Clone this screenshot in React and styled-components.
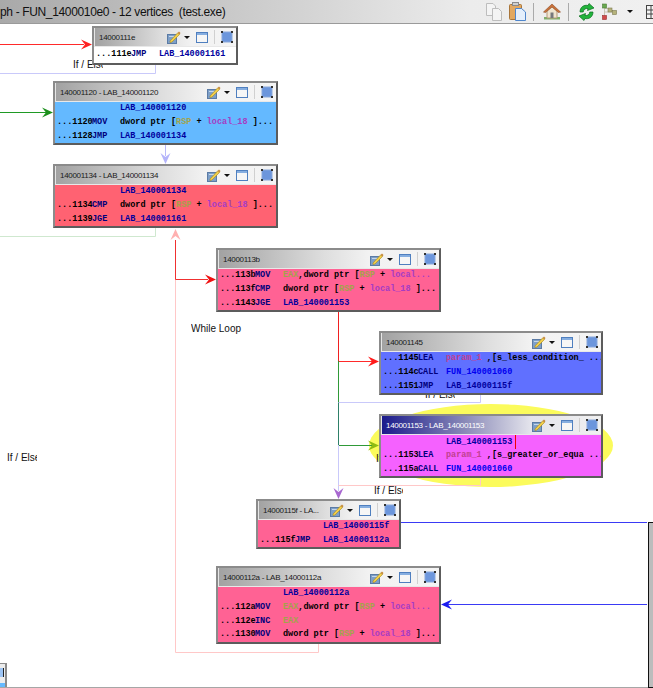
import React from "react";
import styled, { createGlobalStyle } from "styled-components";

const GlobalStyle = createGlobalStyle`
  html, body {
    margin: 0;
    padding: 0;
    background: #fff;
  }
`;

const Page = styled.div`
  width: 653px;
  height: 688px;
  overflow: hidden;
  display: flex;
  flex-direction: column;
  font-family: "Liberation Sans", Arial, sans-serif;
`;

const TitleBar = styled.div`
  height: 23px;
  flex: none;
  display: flex;
  align-items: center;
  overflow: hidden;
  border-bottom: 1px solid #9a9a9a;
  background: linear-gradient(90deg, #a9a9a9 0%, #d2d2d2 45%, #ececec 72%, #f0f0f0 100%);
`;

const TitleText = styled.span`
  font-size: 12px;
  letter-spacing: -0.35px;
  color: #111;
  white-space: pre;
`;

const Tools = styled.div`
  margin-left: auto;
  margin-right: -7px;
  display: flex;
  align-items: center;
  gap: 7px;
  flex: none;
`;

const ToolSep = styled.div`
  width: 1px;
  height: 18px;
  background: #aaa;
  margin-right: 2px;
`;

const Canvas = styled.div`
  position: relative;
  flex: 1;
  background: #fff;
  border-bottom: 1px solid #a6a6a6;
`;

const Edges = styled.svg`
  position: absolute;
  left: 0;
  top: 0;
  width: 653px;
  height: 664px;
`;

const EdgeLabel = styled.span`
  position: absolute;
  left: ${(p) => p.$x}px;
  top: ${(p) => p.$y}px;
  width: ${(p) => p.$w}px;
  overflow: hidden;
  white-space: pre;
  font-size: 10px;
  line-height: 12px;
  color: #111;
`;

const Node = styled.div`
  position: absolute;
  left: ${(p) => p.$x}px;
  top: ${(p) => p.$y}px;
  width: ${(p) => p.$w}px;
  box-sizing: border-box;
  border: 2px solid #8b8b8b;
  border-right-color: #5c5c5c;
  border-bottom-color: #5c5c5c;
  background: #e6e6e6;
`;

const NodeHeader = styled.div`
  height: 18px;
  margin-left: 1px;
  padding: 0 3px 0 4px;
  display: flex;
  align-items: center;
  border-bottom: 1px solid #e8e8e8;
  background: ${(p) =>
    p.$active
      ? "linear-gradient(90deg, #1b1b8c 0%, #8a8ab8 38%, #e4e4ec 68%, #f0f0f0 100%)"
      : "linear-gradient(90deg, #a2a2a2 0%, #dedede 48%, #f2f2f2 68%, #f4f4f4 100%)"};
`;

const NodeTitle = styled.span`
  flex: 1;
  min-width: 0;
  overflow: hidden;
  white-space: pre;
  font-size: 8px;
  letter-spacing: -0.3px;
  color: ${(p) => (p.$active ? "#fff" : "#1a1a1a")};
`;

const HeaderTools = styled.div`
  display: flex;
  align-items: center;
  flex: none;
`;

const Caret = styled.span`
  width: 0;
  height: 0;
  margin: 0 6px 0 3px;
  border-left: 3px solid transparent;
  border-right: 3px solid transparent;
  border-top: 3px solid #111;
`;

const HeaderSep = styled.span`
  width: 1px;
  height: 14px;
  margin: 0 6px 0 6px;
  background: #d0d0d0;
`;

const NodeBody = styled.div`
  background: ${(p) => p.$color};
  padding: ${(p) => (p.$roomy ? "1px 0" : "0")};
  overflow: hidden;
`;

const Row = styled.div`
  height: 13.7px;
  padding-left: 2px;
  display: grid;
  grid-template-columns: 35px 28px 1fr;
  align-items: center;
  white-space: pre;
  font-family: "Liberation Mono", "Courier New", monospace;
  font-size: 8.5px;
  line-height: 13px;
  font-weight: 700;
  color: #000;
`;

const TONES = {
  mnem: "#00007c",
  lab: "#00009e",
  fun: "#0000f0",
  reg: "#a3a34a",
  local: "#a63cc4",
  param: "#c0408f",
  plain: "#000",
};

const Part = styled.span`
  color: ${(p) => TONES[p.$tone || "plain"]};
  text-decoration: ${(p) => (p.$tone === "lab" || p.$tone === "fun" ? "none" : "none")};
`;

const Cursor = styled.span`
  display: inline-block;
  width: 1px;
  height: 14px;
  margin-left: 3px;
  vertical-align: middle;
  background: #f00000;
`;

const Minimap = styled.div`
  position: absolute;
  right: -1px;
  top: 498px;
  bottom: -1px;
  width: 6px;
  box-sizing: border-box;
  border: 1px solid #111;
  background: #bcbcbc;
`;

const Satellite = styled.div`
  position: absolute;
  left: 0;
  bottom: 0;
  width: 7px;
  height: 24px;
  box-sizing: border-box;
  border-top: 1px solid #8b8b8b;
  border-right: 2px solid #8b8b8b;
  background: #ececec;
  display: flex;
  flex-direction: column;
  justify-content: flex-end;
`;

const SatelliteBody = styled.div`
  height: 4px;
  background: #66baff;
`;

const SatelliteIcon = styled.div`
  width: 3px;
  height: 9px;
  margin-bottom: 6px;
  background: #9cc4f4;
  border-right: 1px solid #222;
`;

function EditIcon() {
  return (
    <svg width="14" height="13" viewBox="0 0 14 13">
      <rect x="0.5" y="3.5" width="9" height="9" fill="#7d9fc8" stroke="#5b7ba5" />
      <rect x="2" y="5" width="5" height="1" fill="#c5d6ea" />
      <path d="M3 10 L10.5 2 L12.5 3.5 L5 11 L3 11.5 Z" fill="#f2cf4a" stroke="#a88a20" strokeWidth="0.6" />
      <path d="M10.5 2 L12 0.5 L13.5 2 L12.5 3.5 Z" fill="#c58a3a" />
    </svg>
  );
}

function WindowIcon() {
  return (
    <svg width="12" height="11" viewBox="0 0 12 11">
      <rect x="0.5" y="0.5" width="11" height="10" fill="#f6f6f6" stroke="#4f7fbf" />
      <rect x="1" y="1" width="10" height="2" fill="#86aee0" />
    </svg>
  );
}

function FullIcon() {
  return (
    <svg width="12" height="12" viewBox="0 0 12 12">
      <rect x="1" y="1" width="10" height="10" fill="#6c96dc" stroke="#88a8dc" />
      <rect x="0" y="0" width="2" height="2" fill="#333" />
      <rect x="10" y="0" width="2" height="2" fill="#333" />
      <rect x="0" y="10" width="2" height="2" fill="#333" />
      <rect x="10" y="10" width="2" height="2" fill="#333" />
    </svg>
  );
}

function CopyIcon() {
  return (
    <svg width="16" height="18" viewBox="0 0 16 18">
      <path d="M0.5 0.5 H7 L9.5 3 V12.5 H0.5 Z" fill="#f4f4f4" stroke="#bdbdbd" />
      <path d="M6.5 5.5 H12.5 L15.5 8.5 V17.5 H6.5 Z" fill="#f4f4f4" stroke="#bdbdbd" />
    </svg>
  );
}

function PasteIcon() {
  return (
    <svg width="17" height="19" viewBox="0 0 17 19">
      <rect x="0.5" y="2.5" width="12" height="15" rx="1" fill="#e2a860" stroke="#a8753a" />
      <rect x="3.5" y="0.5" width="6" height="3" fill="#cfcfcf" stroke="#8a8a8a" />
      <path d="M6.5 6.5 H12.5 L16.5 10 V18.5 H6.5 Z" fill="#e4effc" stroke="#4f86cc" />
    </svg>
  );
}

function HomeIcon() {
  return (
    <svg width="18" height="17" viewBox="0 0 18 17">
      <rect x="1" y="14" width="16" height="2.5" fill="#7fae6a" />
      <path d="M4 8 V15 H14 V8 L9 3.5 Z" fill="#efe4cf" stroke="#b69a78" />
      <path d="M0.5 9 L9 1 L17.5 9 L15.5 9.5 L9 4 L2.5 9.5 Z" fill="#c9713a" stroke="#8f4f27" strokeWidth="0.6" />
      <rect x="7.5" y="9.5" width="3" height="5.5" fill="#76787c" />
    </svg>
  );
}

function RefreshIcon() {
  return (
    <svg width="17" height="18" viewBox="0 0 17 18">
      <path d="M2 9 C2 4 6 1.5 10 2.5 L11 0.5 L16 5 L9.5 7.5 L10 5.5 C7.5 5 5.5 6.5 5.2 9 Z" fill="#22b43c" stroke="#0d6d20" strokeWidth="0.7" />
      <path d="M15 9 C15 14 11 16.5 7 15.5 L6 17.5 L1 13 L7.5 10.5 L7 12.5 C9.5 13 11.5 11.5 11.8 9 Z" fill="#22b43c" stroke="#0d6d20" strokeWidth="0.7" />
    </svg>
  );
}

function GraphIcon() {
  return (
    <svg width="15" height="17" viewBox="0 0 15 17">
      <path d="M2.5 3 V13 M2.5 5.5 H8 L12 9 M2.5 9 H11" fill="none" stroke="#c9c4b4" />
      <rect x="0.5" y="1" width="4" height="4" fill="#69a84f" stroke="#4b7d37" strokeWidth="0.6" />
      <rect x="6" y="5" width="4" height="4" fill="#b5b27a" stroke="#7c7a50" strokeWidth="0.6" />
      <rect x="10.5" y="7.5" width="4" height="4" fill="#b5b27a" stroke="#7c7a50" strokeWidth="0.6" />
      <rect x="0.5" y="12.5" width="4" height="4" fill="#d24a4a" stroke="#983030" strokeWidth="0.6" />
    </svg>
  );
}

function LayoutIcon() {
  return (
    <svg width="14" height="14" viewBox="0 0 14 14">
      <rect x="0.5" y="0.5" width="13" height="13" fill="#f4f4f4" stroke="#444" />
      <path d="M0.5 5 H13.5 M0.5 9 H13.5 M5 0.5 V13.5" stroke="#444" fill="none" />
    </svg>
  );
}

function Arrow({ x, y, dir, color }) {
  const angle = { r: 0, d: 90, l: 180, u: 270 }[dir];
  return (
    <polygon
      points="0,0 -11,-5 -7,0 -11,5"
      fill={color}
      transform={`translate(${x} ${y}) rotate(${angle})`}
    />
  );
}

const LINES = [
  ["M0 44.5 H84", "#ff2a2a"],
  ["M155.5 64 V73.5 H0", "#c9c9fa"],
  ["M0 112.5 H46", "#1f9a24"],
  ["M165.5 144 V156", "#b9b9fa"],
  ["M155.5 228 V236.5 H0", "#cfe8cf"],
  ["M318.5 643 V652.5 H175.5 V279", "#ffc8c8"],
  ["M175.5 240 V279.5 H208", "#f03030"],
  ["M338.5 311 V361", "#f02020"],
  ["M338.5 361.5 H372", "#ff2a2a"],
  ["M338.5 361 V402", "#2f9a38"],
  ["M338.5 402 V445", "#2e8068"],
  ["M338.5 445.5 H372", "#2f9a38"],
  ["M338.5 402.5 H480.5 V394", "#c9c9fa"],
  ["M338.5 445 V491", "#c9c9fa"],
  ["M338.5 485.5 H480.5 V477", "#ffc8c8"],
  ["M401 522.5 H647", "#3a3af5"],
  ["M448 604.5 H647", "#3a3af5"],
];

const ARROWS = [
  { x: 92, y: 44.5, dir: "r", color: "#ff2020" },
  { x: 53, y: 112.5, dir: "r", color: "#1c8f1c" },
  { x: 165.5, y: 164, dir: "d", color: "#b4b4fa" },
  { x: 175.5, y: 229, dir: "u", color: "#ffb0b0" },
  { x: 216, y: 279.5, dir: "r", color: "#f01010" },
  { x: 379, y: 361.5, dir: "r", color: "#ff1a1a" },
  { x: 379, y: 445.5, dir: "r", color: "#8fbb12" },
  { x: 338.5, y: 499, dir: "d", color: "#a868d0" },
  { x: 441, y: 604.5, dir: "l", color: "#1c1cf0" },
];

const LABELS = [
  { x: 73, y: 35, w: 30, text: "If / Else" },
  { x: 191, y: 299, w: 60, text: "While Loop" },
  { x: 425, y: 365, w: 30, text: "If / Else" },
  { x: 7, y: 428, w: 30, text: "If / Else" },
  { x: 376, y: 429, w: 30, text: "If / Else" },
  { x: 374, y: 461, w: 29, text: "If / Else" },
];

const RSP_LOCAL = [
  ["dword ptr [", "plain"],
  ["RSP", "reg"],
  [" + ", "plain"],
  ["local_18", "local"],
  [" ]...", "plain"],
];

const NODES = [
  {
    x: 92, y: 2, w: 146, title: "14000111e", color: "#fff", roomy: true, compact: true,
    rows: [{ addr: "...111e", mnem: "JMP", ops: [["LAB_140001161", "lab"]] }],
  },
  {
    x: 53, y: 57, w: 225, title: "140001120 - LAB_140001120", color: "#64b9ff",
    rows: [
      { ops: [["LAB_140001120", "lab"]] },
      { addr: "...1120", mnem: "MOV", ops: RSP_LOCAL },
      { addr: "...1128", mnem: "JMP", ops: [["LAB_140001134", "lab"]] },
    ],
  },
  {
    x: 53, y: 140, w: 225, title: "140001134 - LAB_140001134", color: "#ff6272",
    rows: [
      { ops: [["LAB_140001134", "lab"]] },
      { addr: "...1134", mnem: "CMP", ops: RSP_LOCAL },
      { addr: "...1139", mnem: "JGE", ops: [["LAB_140001161", "lab"]] },
    ],
  },
  {
    x: 216, y: 224, w: 225, title: "14000113b", color: "#ff6294",
    rows: [
      {
        addr: "...113b", mnem: "MOV",
        ops: [["EAX", "reg"], [",dword ptr [", "plain"], ["RSP", "reg"], [" + ", "plain"], ["local...", "local"]],
      },
      { addr: "...113f", mnem: "CMP", ops: RSP_LOCAL },
      { addr: "...1143", mnem: "JGE", ops: [["LAB_140001153", "lab"]] },
    ],
  },
  {
    x: 379, y: 307, w: 224, title: "140001145", color: "#6070ff",
    rows: [
      {
        addr: "...1145", mnem: "LEA",
        ops: [["param_1", "param"], [" ,[s_less_condition_ ...", "plain"]],
      },
      { addr: "...114c", mnem: "CALL", ops: [["FUN_140001060", "fun"]] },
      { addr: "...1151", mnem: "JMP", ops: [["LAB_14000115f", "lab"]] },
    ],
  },
  {
    x: 379, y: 390, w: 224, title: "140001153 - LAB_140001153", color: "#f561ff", active: true,
    rows: [
      { ops: [["LAB_140001153", "lab"]], cursor: true },
      {
        addr: "...1153", mnem: "LEA",
        ops: [["param_1", "param"], [" ,[s_greater_or_equa ...", "plain"]],
      },
      { addr: "...115a", mnem: "CALL", ops: [["FUN_140001060", "fun"]] },
    ],
  },
  {
    x: 256, y: 475, w: 145, title: "14000115f - LA...", color: "#ff6294",
    rows: [
      { ops: [["LAB_14000115f", "lab"]] },
      { addr: "...115f", mnem: "JMP", ops: [["LAB_14000112a", "lab"]] },
    ],
  },
  {
    x: 216, y: 542, w: 225, title: "14000112a - LAB_14000112a", color: "#ff6294",
    rows: [
      { ops: [["LAB_14000112a", "lab"]] },
      {
        addr: "...112a", mnem: "MOV",
        ops: [["EAX", "reg"], [",dword ptr [", "plain"], ["RSP", "reg"], [" + ", "plain"], ["local...", "local"]],
      },
      { addr: "...112e", mnem: "INC", ops: [["EAX", "reg"]] },
      { addr: "...1130", mnem: "MOV", ops: RSP_LOCAL },
    ],
  },
];

function GraphNode({ node }) {
  return (
    <Node $x={node.x} $y={node.y} $w={node.w}>
      <NodeHeader $active={node.active}>
        <NodeTitle $active={node.active}>{node.title}</NodeTitle>
        <HeaderTools>
          <EditIcon />
          <Caret />
          <WindowIcon />
          <HeaderSep />
          <FullIcon />
        </HeaderTools>
      </NodeHeader>
      <NodeBody $color={node.color} $roomy={node.roomy}>
        {node.rows.map((row, i) => (
          <Row key={i}>
            <span>{row.addr}</span>
            <Part $tone="mnem">{row.mnem}</Part>
            <span>
              {row.ops.map(([text, tone], j) => (
                <Part key={j} $tone={tone}>{text}</Part>
              ))}
              {row.cursor && <Cursor />}
            </span>
          </Row>
        ))}
      </NodeBody>
    </Node>
  );
}

export default function App() {
  return (
    <Page>
      <GlobalStyle />
      <TitleBar>
        <TitleText>{"ph - FUN_1400010e0 - 12 vertices  (test.exe)"}</TitleText>
        <Tools>
          <CopyIcon />
          <PasteIcon />
          <ToolSep />
          <HomeIcon />
          <ToolSep />
          <RefreshIcon />
          <GraphIcon />
          <Caret />
          <LayoutIcon />
        </Tools>
      </TitleBar>
      <Canvas>
        <Edges viewBox="0 24 653 664">
          <ellipse cx="491" cy="445.5" rx="122" ry="41.5" fill="#fbfb5c" />
          {LINES.map(([d, color], i) => (
            <path key={i} d={d} fill="none" stroke={color} strokeWidth="1" />
          ))}
          {ARROWS.map((a, i) => (
            <Arrow key={i} {...a} />
          ))}
        </Edges>
        {LABELS.map((l, i) => (
          <EdgeLabel key={i} $x={l.x} $y={l.y} $w={l.w}>{l.text}</EdgeLabel>
        ))}
        {NODES.map((node) => (
          <GraphNode key={node.title} node={node} />
        ))}
        <Minimap />
        <Satellite>
          <SatelliteIcon />
          <SatelliteBody />
        </Satellite>
      </Canvas>
    </Page>
  );
}
